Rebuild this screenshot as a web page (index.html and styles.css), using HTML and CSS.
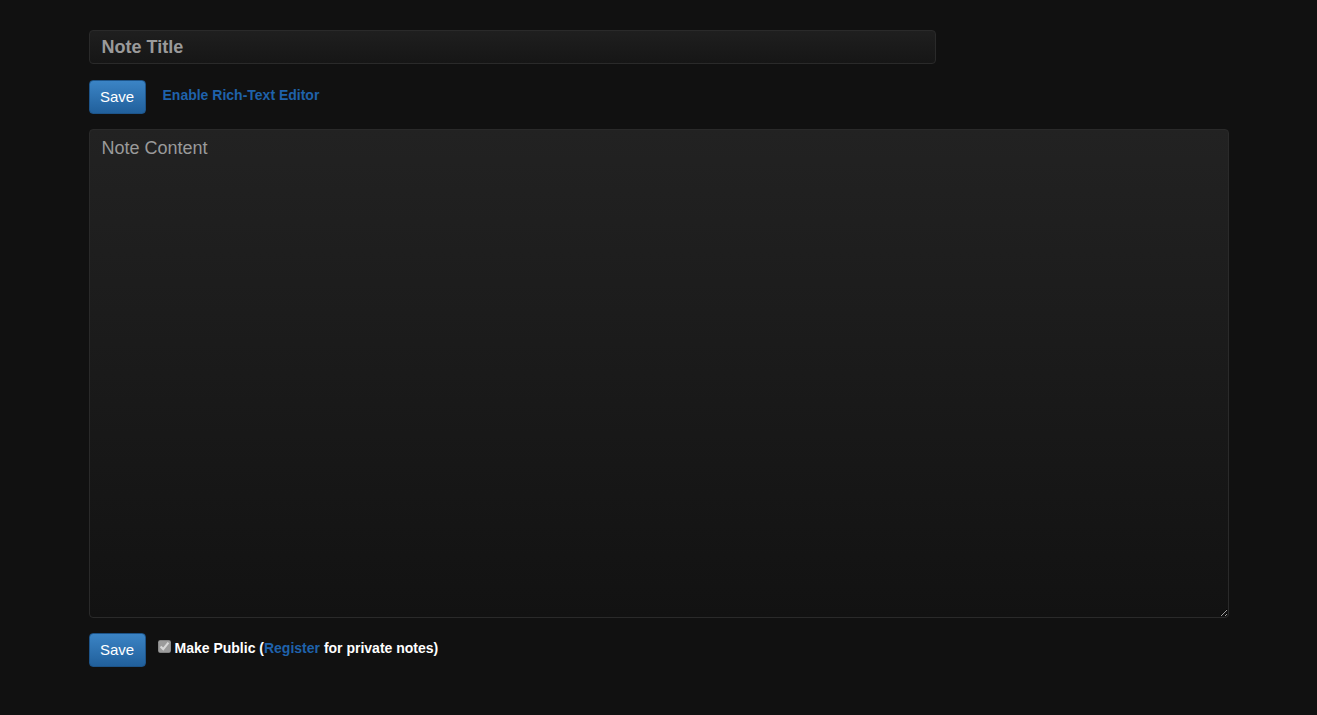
FILE: index.html
```html
<!DOCTYPE html>
<html lang="en">
<head>
    <meta charset="UTF-8">
    <meta name="viewport" content="width=device-width, initial-scale=1.0">
    <title>New Note</title>
    <link rel="stylesheet" href="styles.css">
</head>
<body>
<div class="container">
    <form class="note-form">
        <input type="text" class="note-title" placeholder="Note Title">
        <div class="toolbar">
            <button type="button" class="btn-save">Save</button>
            <a href="#" class="rich-link">Enable Rich-Text Editor</a>
        </div>
        <textarea class="note-content" placeholder="Note Content"></textarea>
        <div class="footer-row">
            <button type="button" class="btn-save">Save</button>
            <label class="public-label">
                <input type="checkbox" checked disabled>
                <span>Make Public (<a href="#">Register</a> for private notes)</span>
            </label>
        </div>
    </form>
</div>
</body>
</html>
```

FILE: styles.css
```css
:root {
    --bg-page: #111111;
    --color-link: #1f62ab;
    --color-placeholder: #9a9a9a;
    --border-field: #2a2a2a;
}

* {
    box-sizing: border-box;
}

body {
    margin: 0;
    background: var(--bg-page);
    font-family: 'Liberation Sans', Arial, sans-serif;
    color: #ffffff;
}

.container {
    width: 1140px;
    margin: 0 auto;
    padding-top: 30px;
}

.note-form {
    display: flex;
    flex-direction: column;
}

.note-title {
    width: 847px;
    height: 34px;
    padding: 0 12px;
    border: 1px solid var(--border-field);
    border-radius: 4px;
    background: linear-gradient(to bottom, #1f1f1f, #161616);
    color: #cccccc;
    font-family: inherit;
    font-size: 18px;
    font-weight: bold;
    outline: none;
}

.note-title::placeholder {
    color: var(--color-placeholder);
}

.toolbar {
    display: flex;
    align-items: center;
    gap: 17px;
    margin-top: 16px;
}

.btn-save {
    width: 57px;
    height: 34px;
    padding: 0 0 2px;
    border: 1px solid #1d5489;
    border-radius: 4px;
    background: linear-gradient(to bottom, #3b84c5, #21609c);
    color: #ffffff;
    font-family: inherit;
    font-size: 15px;
    cursor: pointer;
}

.rich-link {
    margin-top: -4px;
    color: var(--color-link);
    font-size: 14px;
    font-weight: bold;
    text-decoration: none;
}

.note-content {
    width: 1140px;
    height: 489px;
    margin-top: 15px;
    padding: 7px 12px;
    border: 1px solid var(--border-field);
    border-radius: 4px;
    background: linear-gradient(to bottom, #222222, #121212);
    color: #cccccc;
    font-family: inherit;
    font-size: 18px;
    line-height: 22px;
    resize: vertical;
    outline: none;
}

.note-content::placeholder {
    color: var(--color-placeholder);
}

.footer-row {
    display: flex;
    align-items: flex-start;
    gap: 12px;
    margin-top: 15px;
}

.public-label {
    display: flex;
    align-items: flex-start;
    gap: 4px;
    margin-top: 7px;
    font-size: 14px;
    font-weight: bold;
    line-height: 16px;
}

.public-label input {
    width: 13px;
    height: 13px;
    margin: 0;
}

.public-label a {
    color: var(--color-link);
    text-decoration: none;
}
```
